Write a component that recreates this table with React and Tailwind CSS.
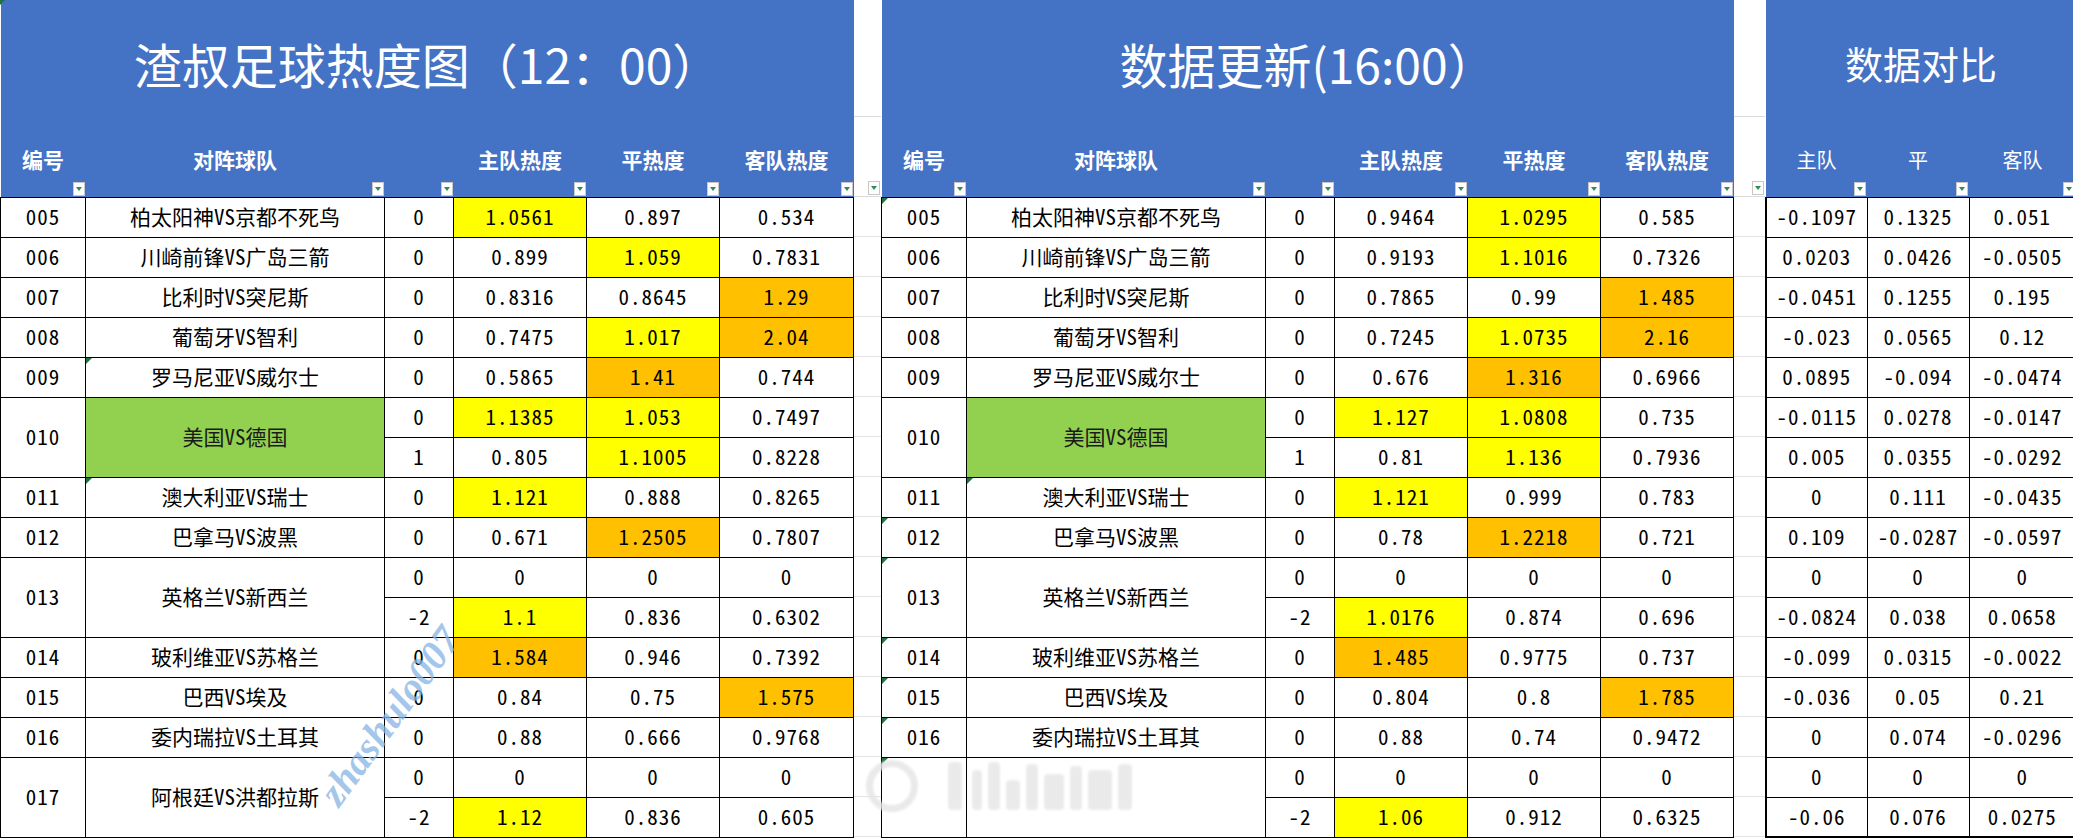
import React from "react";

const BLUE = "bg-[#4472c4]";
const FONT = "font-['Noto_Sans_CJK_SC',sans-serif] [font-feature-settings:'hwid']";

// "*" = 黄色高亮, "!" = 橙色高亮
const before = [
  { id: "005", team: "柏太阳神VS京都不死鸟", rows: [["0", "1.0561*", "0.897", "0.534"]] },
  { id: "006", team: "川崎前锋VS广岛三箭", rows: [["0", "0.899", "1.059*", "0.7831"]] },
  { id: "007", team: "比利时VS突尼斯", rows: [["0", "0.8316", "0.8645", "1.29!"]] },
  { id: "008", team: "葡萄牙VS智利", rows: [["0", "0.7475", "1.017*", "2.04!"]] },
  { id: "009", team: "罗马尼亚VS威尔士", teamMark: true, rows: [["0", "0.5865", "1.41!", "0.744"]] },
  { id: "010", team: "美国VS德国", green: true, rows: [["0", "1.1385*", "1.053*", "0.7497"], ["1", "0.805", "1.1005*", "0.8228"]] },
  { id: "011", team: "澳大利亚VS瑞士", teamMark: true, rows: [["0", "1.121*", "0.888", "0.8265"]] },
  { id: "012", team: "巴拿马VS波黑", rows: [["0", "0.671", "1.2505!", "0.7807"]] },
  { id: "013", team: "英格兰VS新西兰", rows: [["0", "0", "0", "0"], ["-2", "1.1*", "0.836", "0.6302"]] },
  { id: "014", team: "玻利维亚VS苏格兰", rows: [["0", "1.584!", "0.946", "0.7392"]] },
  { id: "015", team: "巴西VS埃及", rows: [["0", "0.84", "0.75", "1.575!"]] },
  { id: "016", team: "委内瑞拉VS土耳其", rows: [["0", "0.88", "0.666", "0.9768"]] },
  { id: "017", team: "阿根廷VS洪都拉斯", rows: [["0", "0", "0", "0"], ["-2", "1.12*", "0.836", "0.605"]] },
];

const after = [
  { id: "005", team: "柏太阳神VS京都不死鸟", idMark: true, rows: [["0", "0.9464", "1.0295*", "0.585"]] },
  { id: "006", team: "川崎前锋VS广岛三箭", rows: [["0", "0.9193", "1.1016*", "0.7326"]] },
  { id: "007", team: "比利时VS突尼斯", rows: [["0", "0.7865", "0.99", "1.485!"]] },
  { id: "008", team: "葡萄牙VS智利", rows: [["0", "0.7245", "1.0735*", "2.16!"]] },
  { id: "009", team: "罗马尼亚VS威尔士", rows: [["0", "0.676", "1.316!", "0.6966"]] },
  { id: "010", team: "美国VS德国", green: true, rows: [["0", "1.127*", "1.0808*", "0.735"], ["1", "0.81", "1.136*", "0.7936"]] },
  { id: "011", team: "澳大利亚VS瑞士", teamMark: true, rows: [["0", "1.121*", "0.999", "0.783"]] },
  { id: "012", team: "巴拿马VS波黑", idMark: true, rows: [["0", "0.78", "1.2218!", "0.721"]] },
  { id: "013", team: "英格兰VS新西兰", idMark: true, rows: [["0", "0", "0", "0"], ["-2", "1.0176*", "0.874", "0.696"]] },
  { id: "014", team: "玻利维亚VS苏格兰", idMark: true, rows: [["0", "1.485!", "0.9775", "0.737"]] },
  { id: "015", team: "巴西VS埃及", idMark: true, rows: [["0", "0.804", "0.8", "1.785!"]] },
  { id: "016", team: "委内瑞拉VS土耳其", idMark: true, rows: [["0", "0.88", "0.74", "0.9472"]] },
  { id: "", team: "", idMark: true, rows: [["0", "0", "0", "0"], ["-2", "1.06*", "0.912", "0.6325"]] },
];

const diff = [
  ["-0.1097", "0.1325", "0.051"],
  ["0.0203", "0.0426", "-0.0505"],
  ["-0.0451", "0.1255", "0.195"],
  ["-0.023", "0.0565", "0.12"],
  ["0.0895", "-0.094", "-0.0474"],
  ["-0.0115", "0.0278", "-0.0147"],
  ["0.005", "0.0355", "-0.0292"],
  ["0", "0.111", "-0.0435"],
  ["0.109", "-0.0287", "-0.0597"],
  ["0", "0", "0"],
  ["-0.0824", "0.038", "0.0658"],
  ["-0.099", "0.0315", "-0.0022"],
  ["-0.036", "0.05", "0.21"],
  ["0", "0.074", "-0.0296"],
  ["0", "0", "0"],
  ["-0.06", "0.076", "0.0275"],
];

function Filter() {
  return (
    <span className="absolute bottom-[1px] right-[1px] flex h-[14px] w-[12px] items-center justify-center border border-[#c8c8c8] bg-white">
      <span className="h-0 w-0 border-x-[3px] border-t-[4px] border-x-transparent border-t-[#2e8b57]" />
    </span>
  );
}

function Mark() {
  return (
    <span className="absolute left-0 top-0 h-0 w-0 border-r-[6px] border-t-[6px] border-r-transparent border-t-[#217346]" />
  );
}

function Num({ v }) {
  const bg = v.endsWith("*") ? "bg-[#ffff00]" : v.endsWith("!") ? "bg-[#ffc000]" : "bg-white";
  return (
    <td className={`h-[40px] border border-black p-0 text-center align-middle tracking-[1px] ${bg}`}>
      {v.replace(/[*!]$/, "")}
    </td>
  );
}

function HeatTable({ title, data, widthClass, cols }) {
  const labels = ["编号", "对阵球队", "", "主队热度", "平热度", "客队热度"];
  return (
    <table className={`${widthClass} table-fixed border-collapse text-[21px] text-black`}>
      <colgroup>
        {cols.map((c, i) => (
          <col key={i} className={c} />
        ))}
      </colgroup>
      <thead>
        <tr className={`h-[117px] ${BLUE}`}>
          <th colSpan={6} className="p-0 pt-[8px] text-center align-middle text-[48px] font-normal text-white [font-feature-settings:normal]">
            {title}
          </th>
        </tr>
        <tr className={`h-[80px] ${BLUE}`}>
          {labels.map((l, i) => (
            <th key={i} className="relative p-0 pt-[6px] text-center align-middle text-[21px] font-bold text-white">
              {l}
              <Filter />
            </th>
          ))}
        </tr>
      </thead>
      <tbody>
        {data.map((m) =>
          m.rows.map((r, j) => (
            <tr key={m.id + m.team + j}>
              {j === 0 && (
                <td rowSpan={m.rows.length} className="relative border border-black bg-white p-0 text-center align-middle tracking-[1px]">
                  {m.idMark && <Mark />}
                  {m.id}
                </td>
              )}
              {j === 0 && (
                <td
                  rowSpan={m.rows.length}
                  className={`relative border border-black p-0 text-center align-middle ${m.green ? "bg-[#92d050] text-[#1a1a1a]" : "bg-white"}`}
                >
                  {m.teamMark && <Mark />}
                  {m.team}
                </td>
              )}
              {r.map((v, k) => (
                <Num key={k} v={v} />
              ))}
            </tr>
          ))
        )}
      </tbody>
    </table>
  );
}

function Gap({ widthClass }) {
  return (
    <div className={`${widthClass} flex shrink-0 flex-col`}>
      <div className="h-[117px] border-b border-[#dadada]" />
      <div className="relative h-[80px] border-b border-[#dadada]">
        <Filter />
      </div>
      {diff.map((_, i) => (
        <div key={i} className="h-[40px] border-b border-[#e3e3e3]" />
      ))}
    </div>
  );
}

function DiffTable() {
  return (
    <table className="w-[310px] table-fixed border-collapse text-[21px] text-black">
      <colgroup>
        <col className="w-[101px]" />
        <col className="w-[102px]" />
        <col className="w-[107px]" />
      </colgroup>
      <thead>
        <tr className={`h-[117px] ${BLUE}`}>
          <th colSpan={3} className="p-0 pt-[8px] text-center align-middle text-[38px] font-normal text-white">
            数据对比
          </th>
        </tr>
        <tr className={`h-[80px] ${BLUE}`}>
          {["主队", "平", "客队"].map((l) => (
            <th key={l} className="relative p-0 pt-[6px] text-center align-middle text-[20px] font-normal text-white">
              {l}
              <Filter />
            </th>
          ))}
        </tr>
      </thead>
      <tbody>
        {diff.map((r, i) => (
          <tr key={i} className="h-[40px]">
            {r.map((v, k) => (
              <td
                key={k}
                className={`border border-black bg-white p-0 text-center align-middle tracking-[1px] ${k === 0 ? "border-l-2" : ""} ${k === 2 ? "border-r-2" : ""} ${i === diff.length - 1 ? "border-b-2" : ""}`}
              >
                {v}
              </td>
            ))}
          </tr>
        ))}
      </tbody>
    </table>
  );
}

export default function App() {
  return (
    <div className={`relative h-[839px] w-[2073px] overflow-hidden bg-white ${FONT}`}>
      <div className="flex items-start">
        <HeatTable
          title="渣叔足球热度图（12：00）"
          data={before}
          widthClass="w-[853px] shrink-0"
          cols={["w-[85px]", "w-[299px]", "w-[69px]", "w-[133px]", "w-[133px]", "w-[134px]"]}
        />
        <Gap widthClass="w-[27px]" />
        <HeatTable
          title="数据更新(16:00）"
          data={after}
          widthClass="w-[852px] shrink-0"
          cols={["w-[85px]", "w-[299px]", "w-[69px]", "w-[133px]", "w-[133px]", "w-[133px]"]}
        />
        <Gap widthClass="w-[31px]" />
        <DiffTable />
      </div>

      {/* 左上角标记 */}
      <span className="absolute left-0 top-0 h-0 w-0 border-r-[5px] border-t-[5px] border-r-transparent border-t-[#217346]" />

      {/* 水印 */}
      <div className="pointer-events-none absolute left-[390px] top-[716px] -translate-x-1/2 -translate-y-1/2 -rotate-[54deg] whitespace-nowrap font-['Liberation_Serif',serif] text-[40px] font-bold italic text-[#86b4e3]/75">
        zhashulo007
      </div>
      <div className="pointer-events-none absolute left-[866px] top-[760px] flex items-center gap-[10px] opacity-80 blur-[1px]">
        <div className="h-[52px] w-[52px] rounded-full border-[7px] border-[#e4e4e4]" />
        <div className="ml-[20px] h-[48px] w-[14px] rounded bg-[#e6e6e6]" />
        <div className="flex h-[48px] items-end gap-[6px]">
          <div className="h-[40px] w-[10px] rounded bg-[#e6e6e6]" />
          <div className="h-[48px] w-[12px] rounded bg-[#e6e6e6]" />
          <div className="h-[30px] w-[14px] rounded bg-[#e6e6e6]" />
          <div className="h-[46px] w-[12px] rounded bg-[#e6e6e6]" />
          <div className="h-[36px] w-[20px] rounded bg-[#e6e6e6]" />
          <div className="h-[44px] w-[12px] rounded bg-[#e6e6e6]" />
          <div className="h-[40px] w-[24px] rounded bg-[#e6e6e6]" />
          <div className="h-[46px] w-[14px] rounded bg-[#e6e6e6]" />
        </div>
      </div>
    </div>
  );
}
